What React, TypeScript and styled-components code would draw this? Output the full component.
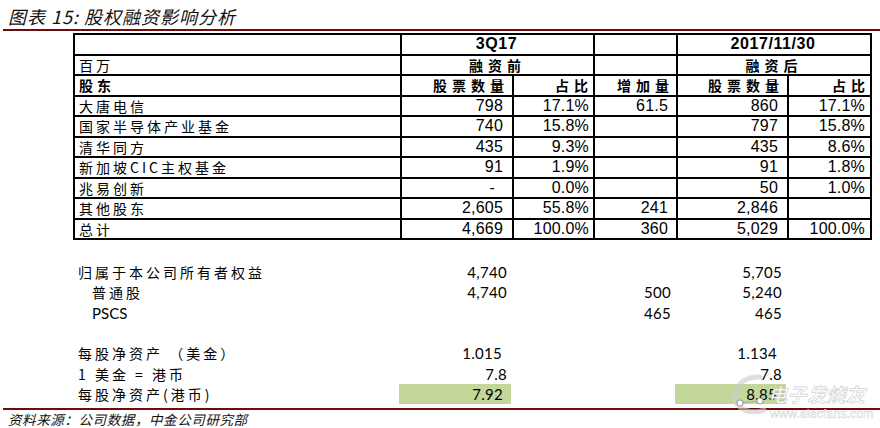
import React from "react";
import styled, { createGlobalStyle } from "styled-components";

const Global = createGlobalStyle`
  html, body { margin: 0; padding: 0; background: #fff; }
  * { box-sizing: border-box; }
`;

const CJK = `"Noto Sans CJK SC", sans-serif`;
const NUM = `"Liberation Sans", Arial, "Noto Sans CJK SC", sans-serif`;
const CAL = `Lato, "Noto Sans CJK SC", sans-serif`;

const Page = styled.div`
  position: relative;
  width: 880px;
  height: 428px;
  overflow: hidden;
  background: #fff;
  color: #000;
`;

const Title = styled.div`
  height: 29px;
  padding: 3px 0 0 8px;
  font-family: ${CJK};
  font-style: italic;
  font-size: 18px;
  line-height: 26px;
  letter-spacing: 1px;
  color: #111;
`;

const Rule = styled.div<{ $left: number; $top?: number }>`
  height: 2px;
  margin: ${(p) => p.$top ?? 0}px 0 0 ${(p) => p.$left}px;
  background: #6e0b0b;
`;

const Table = styled.table`
  margin: 2px 0 0 73px;
  border-collapse: collapse;
  table-layout: fixed;
  width: 797px;
`;

const Row = styled.tr`
  height: 20.5px;
`;

const Cell = styled.td<{ $align?: string; $pad?: number; $bold?: boolean; $cjk?: boolean }>`
  border: 2px solid #000;
  padding: 0 ${(p) => p.$pad ?? 4}px 0 ${(p) => (p.$cjk ? 4 : 2)}px;
  text-align: ${(p) => p.$align ?? "right"};
  vertical-align: middle;
  font-family: ${(p) => (p.$cjk ? CJK : NUM)};
  font-size: ${(p) => (p.$cjk ? 14 : 16)}px;
  font-weight: ${(p) => (p.$bold ? 700 : 400)};
  letter-spacing: ${(p) => (p.$cjk ? (p.$bold ? 5 : 3) : p.$bold ? 0.6 : 0.2)}px;
  line-height: 16px;
  white-space: nowrap;
  overflow: hidden;
`;

const Lower = styled.div`
  margin: 22px 0 0 73px;
  display: grid;
  grid-template-columns: 326px 112px 81px 83px 111px 82px;
  grid-auto-rows: 20.33px;
`;

const Label = styled.div<{ $indent?: boolean; $latin?: boolean }>`
  display: flex;
  align-items: center;
  padding-left: ${(p) => (p.$indent ? 19 : 5)}px;
  font-family: ${(p) => (p.$latin ? CAL : CJK)};
  font-size: ${(p) => (p.$latin ? 15 : 14)}px;
  letter-spacing: ${(p) => (p.$latin ? 0 : 3)}px;
  white-space: pre;
`;

const Value = styled.div<{ $pad: number; $green?: boolean }>`
  display: flex;
  align-items: center;
  justify-content: flex-end;
  padding-right: ${(p) => p.$pad}px;
  background: ${(p) => (p.$green ? "#c4d79b" : "transparent")};
  font-family: ${CAL};
  font-size: 15px;
  letter-spacing: 0.3px;
`;

const Source = styled.div`
  height: 18px;
  padding-left: 8px;
  font-family: ${CJK};
  font-style: italic;
  font-size: 13.5px;
  line-height: 18px;
  letter-spacing: 0.6px;
  color: #111;
`;

const Watermark = styled.div`
  position: absolute;
  left: 730px;
  top: 374px;
  width: 150px;
  height: 54px;
  pointer-events: none;
`;

const MarkLogo = styled.svg`
  position: absolute;
  left: 0;
  top: 0;
`;

const MarkName = styled.div`
  position: absolute;
  left: 38px;
  top: 9px;
  font-family: ${CJK};
  font-style: italic;
  font-weight: 700;
  font-size: 19px;
  line-height: 22px;
  letter-spacing: 0.5px;
  color: rgba(255, 255, 255, 0.85);
  -webkit-text-stroke: 0.7px rgba(160, 160, 160, 0.5);
`;

const MarkUrl = styled.div`
  position: absolute;
  left: 40px;
  top: 33px;
  font-family: "Liberation Sans", sans-serif;
  font-size: 12.5px;
  line-height: 14px;
  color: rgba(255, 255, 255, 0.8);
  -webkit-text-stroke: 0.5px rgba(150, 150, 150, 0.45);
`;

type HolderRow = [string, string, string, string, string, string];

const holders: HolderRow[] = [
  ["大唐电信", "798", "17.1%", "61.5", "860", "17.1%"],
  ["国家半导体产业基金", "740", "15.8%", "", "797", "15.8%"],
  ["清华同方", "435", "9.3%", "", "435", "8.6%"],
  ["新加坡CIC主权基金", "91", "1.9%", "", "91", "1.8%"],
  ["兆易创新", "-", "0.0%", "", "50", "1.0%"],
  ["其他股东", "2,605", "55.8%", "241", "2,846", ""],
  ["总计", "4,669", "100.0%", "360", "5,029", "100.0%"],
];

const colPads = [0, 9, 4, 8, 9, 5];

type LowerRow = {
  label: string;
  indent?: boolean;
  latin?: boolean;
  cells: { v: string; pad: number; green?: boolean }[];
};

const e = (pad = 4) => ({ v: "", pad });

const lowerRows: LowerRow[] = [
  { label: "归属于本公司所有者权益", cells: [{ v: "4,740", pad: 4 }, e(), e(), { v: "5,705", pad: 4 }, e()] },
  { label: "普通股", indent: true, cells: [{ v: "4,740", pad: 4 }, e(), { v: "500", pad: 4 }, { v: "5,240", pad: 4 }, e()] },
  { label: "PSCS", indent: true, latin: true, cells: [e(), e(), { v: "465", pad: 4 }, { v: "465", pad: 4 }, e()] },
  { label: "", cells: [e(), e(), e(), e(), e()] },
  { label: "每股净资产 （美金）", cells: [{ v: "1.015", pad: 9 }, e(), e(), { v: "1.134", pad: 9 }, e()] },
  { label: "1 美金 = 港币", cells: [{ v: "7.8", pad: 4 }, e(), e(), { v: "7.8", pad: 4 }, e()] },
  { label: "每股净资产(港币)", cells: [{ v: "7.92", pad: 8, green: true }, e(), e(), { v: "8.85", pad: 9, green: true }, e()] },
];

export default function App() {
  return (
    <Page>
      <Global />
      <Title>图表 15: 股权融资影响分析</Title>
      <Rule $left={3} />
      <Table>
        <colgroup>
          <col style={{ width: 327 }} />
          <col style={{ width: 112 }} />
          <col style={{ width: 81 }} />
          <col style={{ width: 83 }} />
          <col style={{ width: 111 }} />
          <col style={{ width: 83 }} />
        </colgroup>
        <tbody>
          <Row>
            <Cell $cjk />
            <Cell colSpan={2} $align="center" $bold>3Q17</Cell>
            <Cell />
            <Cell colSpan={2} $align="center" $bold>2017/11/30</Cell>
          </Row>
          <Row>
            <Cell $cjk $align="left">百万</Cell>
            <Cell colSpan={2} $cjk $align="center" $bold>融资前</Cell>
            <Cell />
            <Cell colSpan={2} $cjk $align="center" $bold>融资后</Cell>
          </Row>
          <Row>
            <Cell $cjk $align="left" $bold style={{ letterSpacing: 4 }}>股东</Cell>
            <Cell $cjk $bold $pad={3}>股票数量</Cell>
            <Cell $cjk $bold $pad={0}>占比</Cell>
            <Cell $cjk $bold $pad={2}>增加量</Cell>
            <Cell $cjk $bold $pad={3}>股票数量</Cell>
            <Cell $cjk $bold $pad={0}>占比</Cell>
          </Row>
          {holders.map((r) => (
            <Row key={r[0]}>
              <Cell $cjk $align="left">{r[0]}</Cell>
              {r.slice(1).map((v, i) => (
                <Cell key={i} $pad={v === "-" ? 17 : colPads[i + 1]}>
                  {v}
                </Cell>
              ))}
            </Row>
          ))}
        </tbody>
      </Table>
      <Lower>
        {lowerRows.map((r, ri) => (
          <React.Fragment key={ri}>
            <Label $indent={r.indent} $latin={r.latin}>{r.label}</Label>
            {r.cells.map((c, ci) => (
              <Value key={ci} $pad={c.pad} $green={c.green}>
                {c.v}
              </Value>
            ))}
          </React.Fragment>
        ))}
      </Lower>
      <Rule $left={3} $top={4} />
      <Source>资料来源：公司数据，中金公司研究部</Source>
      <Watermark>
        <MarkLogo width="42" height="42" viewBox="0 0 42 42">
          <path
            d="M30 3 C 12 2, 3 15, 5 25 C 7 35, 20 41, 34 36"
            fill="none"
            stroke="rgba(205,205,205,0.65)"
            strokeWidth="5"
            strokeLinecap="round"
          />
          <line x1="10" y1="29" x2="30" y2="27" stroke="rgba(170,170,170,0.85)" strokeWidth="1.2" />
          <circle cx="10" cy="29" r="3" fill="#fff" stroke="rgba(150,150,150,0.85)" strokeWidth="1.2" />
          <circle cx="30" cy="27" r="3" fill="#fff" stroke="rgba(150,150,150,0.85)" strokeWidth="1.2" />
        </MarkLogo>
        <MarkName>电子发烧友</MarkName>
        <MarkUrl>www.elecfans.com</MarkUrl>
      </Watermark>
    </Page>
  );
}
